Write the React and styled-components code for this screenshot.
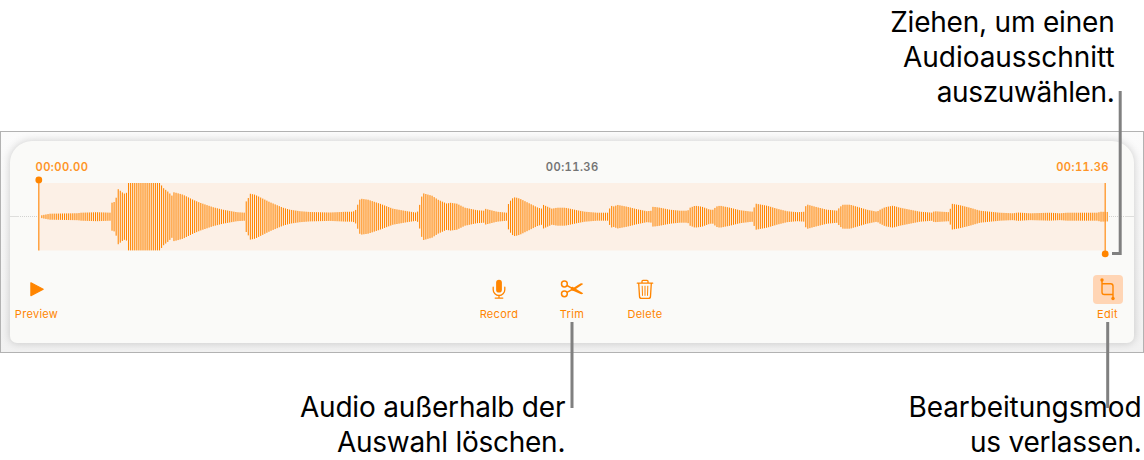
import styled, { createGlobalStyle } from 'styled-components'

const GlobalStyle = createGlobalStyle`
  * {
    box-sizing: border-box;
  }

  body {
    margin: 0;
    background: #FFFFFF;
  }
`

const Page = styled.main`
  position: relative;
  width: 1144px;
  height: 460px;
  overflow: hidden;
  font-family: Inter, "Liberation Sans", sans-serif;
`

const Caption = styled.div`
  font-size: 28px;
  line-height: 35px;
  letter-spacing: ${props => props.$spacing || 0}px;
  text-align: right;
  white-space: nowrap;
  color: #000000;
`

const TopCaptions = styled.div`
  height: 131px;
  padding: 5px 29.5px 0 0;
`

const BottomCaptions = styled.div`
  display: flex;
  justify-content: space-between;
  padding: 37px 2.5px 0 300px;
`

const Frame = styled.section`
  height: 222px;
  padding: 9px;
  border: 1px solid #B2B2B2;
  background: linear-gradient(#FBFBFB, #F1F1F1);
  overflow: hidden;
`

const Panel = styled.div`
  height: 202px;
  border-radius: 22px 22px 7px 7px;
  background: #FAFAF8;
  box-shadow: 0 0 9px rgba(0, 0, 0, 0.19);
`

const Times = styled.div`
  display: grid;
  grid-template-columns: 1fr 1fr 1fr;
  padding: 18px 25px 0 25.5px;
  height: 42px;
`

const Time = styled.span`
  font-size: 11.2px;
  font-weight: 600;
  line-height: 16px;
  letter-spacing: 0.42px;
  font-variant-numeric: tabular-nums;
  text-align: ${props => props.$align};
  color: ${props => props.$muted ? '#747474' : '#FF9426'};
`

const WaveSvg = styled.svg`
  display: block;
  width: 1124px;
  height: 86px;
  margin-top: -8px;
`

const Toolbar = styled.div`
  display: grid;
  grid-template-columns: 53px 1fr 53px;
  padding-top: 14px;
`

const Tools = styled.div`
  display: flex;
  justify-content: center;
  gap: 13px;
`

const ToolButton = styled.button`
  display: flex;
  flex-direction: column;
  align-items: center;
  width: ${props => props.$width || 60}px;
  padding: 0;
  border: 0;
  background: none;
  font-family: inherit;
  font-size: 11px;
  line-height: 16px;
  letter-spacing: 0.3px;
  color: #FF8500;
`

const IconBox = styled.span`
  display: flex;
  width: 30px;
  height: 29px;
  margin-bottom: 2px;
  border-radius: 4px;
  background: ${props => props.$active ? '#FFD5B5' : 'transparent'};
`

const Leaders = styled.svg`
  position: absolute;
  top: 0;
  left: 0;
  pointer-events: none;
`

// [x, half height] points along the recording
const envelope = [
  [39, 0.5], [42, 1.5], [50, 3], [78, 3.5], [81, 4], [97, 4.5], [111, 4],
  [112, 14], [115, 15], [116.7, 21], [118.3, 28], [120.7, 25.5], [124, 23],
  [126.8, 24], [127.5, 33.7], [160, 33.7], [163, 29], [168, 25], [172, 21],
  [174, 24.5], [183, 22], [193, 17], [200, 14], [213, 9.5], [223, 7],
  [237, 4.5], [245, 4], [246, 15], [248, 18], [250, 23], [255, 22],
  [262, 18.5], [270, 14.5], [283, 9], [290, 7], [300, 5.5], [310, 4.7],
  [330, 4.2], [345, 4.9], [353, 5], [356, 7], [357.7, 12], [359, 16.5],
  [361, 18], [368, 17], [380, 13], [393, 8], [407, 5.5], [417, 4],
  [419, 8], [420.5, 17], [423, 23.5], [432, 21], [438, 17], [447, 13],
  [450, 14], [457, 13], [465, 9], [477, 6.5], [484, 6], [485, 8],
  [497, 5], [506.7, 4], [508, 12], [511.7, 18], [515, 19.5], [520, 18],
  [530, 13], [538, 9], [542, 8], [543, 12], [552, 8], [557, 9], [565, 9],
  [570, 8], [577, 6.5], [585, 5], [597, 4], [608, 4], [609.5, 8],
  [610.7, 11], [615, 10], [616.5, 12], [627, 10], [637, 7.5], [647, 5.5],
  [651.7, 6], [653, 10], [660, 9], [670, 7], [680, 6], [687.7, 6],
  [690, 9], [695, 11], [702, 10], [710, 7], [714, 7], [715.5, 10],
  [720, 11], [730, 9], [740, 6.5], [752, 5], [754, 9], [756, 13],
  [767, 11], [777, 8], [787, 5.5], [797, 4.5], [805, 5], [806, 12.5],
  [817, 9.5], [827, 7], [838, 6], [839, 9], [843, 12], [850, 12],
  [857, 10], [867, 7], [877, 5], [880, 7], [885, 9.5], [893, 11],
  [900, 9], [910, 7], [920, 5], [933, 4], [934, 5.5], [949, 4.5],
  [950.3, 8], [951.5, 13], [960, 11.5], [970, 9], [980, 6], [990, 5],
  [1000, 4], [1013, 3.4], [1018, 4.2], [1030, 3.4], [1050, 4], [1060, 3.4],
  [1067, 4], [1083, 4], [1098, 4], [1100, 5], [1109, 4.7],
]

function heightAt(x) {
  const i = envelope.findIndex(point => point[0] > x)
  if (i < 1) return envelope[0][1]
  const [x0, h0] = envelope[i - 1]
  const [x1, h1] = envelope[i]
  return h0 + (h1 - h0) * (x - x0) / (x1 - x0)
}

const PITCH = 2.0647
const bars = []
for (let x = 41.8; x < 1108.8; x += PITCH) {
  bars.push({ x, h: heightAt(x) })
}

function Waveform() {
  return (
    <WaveSvg viewBox="10 175 1124 86">
      <rect x="39" y="183" width="1066" height="67.5" fill="#FCF0E6" />
      <path d="M10 216.5h9M1125 216.5h9" stroke="#DEDEDC" />
      <path d="M20 216.5h18M1109 216.5h16" stroke="#D2D2D0" strokeDasharray="1 1" />
      {bars.map(bar => (
        <rect key={bar.x} x={bar.x - 0.5} y={216.7 - bar.h} width="1.05" height={bar.h * 2} fill="#FF8500" />
      ))}
      <path d="M38.8 180v70.5M1105.2 183v71" stroke="#FF9426" strokeWidth="1.3" />
      <circle cx="38.8" cy="179.9" r="3.4" fill="#FF8500" />
      <circle cx="1105.2" cy="253.9" r="3.4" fill="#FF8500" />
    </WaveSvg>
  )
}

function PlayIcon() {
  return (
    <svg width="30" height="29" viewBox="0 0.8 30 29">
      <path d="M8.9 8.6v12.8L21.2 15z" fill="#FF8500" stroke="#FF8500" strokeWidth="1.2" strokeLinejoin="round" />
    </svg>
  )
}

function MicIcon() {
  return (
    <svg width="30" height="29" viewBox="0 0.8 30 29" fill="none" stroke="#FF8500" strokeWidth="1.3" strokeLinecap="round">
      <rect x="12.1" y="5.6" width="5.8" height="12.8" rx="2.9" fill="#FF8500" stroke="none" />
      <path d="M9.2 13v2.5a5.8 5.8 0 0 0 11.6 0V13M15 21.4v2.5M11.2 23.9h7.6" />
    </svg>
  )
}

function ScissorsIcon() {
  return (
    <svg width="30" height="29" viewBox="0 0.8 30 29" fill="none" stroke="#FF8500" strokeWidth="1.5">
      <circle cx="7.4" cy="9.8" r="2.9" />
      <circle cx="7.4" cy="19.6" r="2.9" />
      <path d="M10 11.3l5.2 2.9M10 18.2l5.4-3.1" />
      <path d="M13.4 15.6L23.4 9.3q1.6-.5 2.8.5L16 16.8zM13.6 13l2-.4 10.6 6.4q-1 1.4-2.7.9l-8-3.6q-1.9-.8-1.9-3.3z" fill="#FF8500" stroke="none" />
    </svg>
  )
}

function TrashIcon() {
  return (
    <svg width="30" height="29" viewBox="0 0.8 30 29" fill="none" stroke="#FF8500" strokeWidth="1.3" strokeLinecap="round" strokeLinejoin="round">
      <path d="M7.3 9h15.4M12 8.9V7.1q0-1 1-1h4q1 0 1 1v1.8M8.7 9.2l.8 13q.1 2 1.9 2h7.2q1.8 0 1.9-2l.8-13" />
      <path d="M12.2 12l.3 9.2M15 12v9.2M17.8 12l-.3 9.2" strokeWidth="1" />
    </svg>
  )
}

function CropIcon() {
  return (
    <svg width="30" height="29" viewBox="0.5 0.5 30 29" fill="none" stroke="#FF8500" strokeWidth="1.4">
      <path d="M9.5 5.5v12.2q0 2.3 2.3 2.3h8.7M9.5 9.2h8.7q2.3 0 2.3 2.3v12.5" />
      <circle cx="9.5" cy="5.5" r="1.7" fill="#FF8500" stroke="none" />
      <circle cx="20.5" cy="24" r="1.7" fill="#FF8500" stroke="none" />
    </svg>
  )
}

function Tool({ label, icon, width, active }) {
  return (
    <ToolButton $width={width}>
      <IconBox $active={active}>{icon}</IconBox>
      {label}
    </ToolButton>
  )
}

export default function App() {
  return (
    <Page>
      <GlobalStyle />
      <TopCaptions>
        <Caption $spacing={-0.2}>Ziehen, um einen</Caption>
        <Caption $spacing={-0.05}>Audioausschnitt</Caption>
        <Caption $spacing={-0.35}>auszuwählen.</Caption>
      </TopCaptions>
      <Frame>
        <Panel>
          <Times>
            <Time $align="left">00:00.00</Time>
            <Time $align="center" $muted>00:11.36</Time>
            <Time $align="right">00:11.36</Time>
          </Times>
          <Waveform />
          <Toolbar>
            <Tool label="Preview" icon={<PlayIcon />} width={53} />
            <Tools>
              <Tool label="Record" icon={<MicIcon />} />
              <Tool label="Trim" icon={<ScissorsIcon />} />
              <Tool label="Delete" icon={<TrashIcon />} />
            </Tools>
            <Tool label="Edit" icon={<CropIcon />} width={53} active />
          </Toolbar>
        </Panel>
      </Frame>
      <BottomCaptions>
        <div>
          <Caption $spacing={-0.22}>Audio außerhalb der</Caption>
          <Caption $spacing={-0.25}>Auswahl löschen.</Caption>
        </div>
        <div>
          <Caption $spacing={-0.1}>Bearbeitungsmod</Caption>
          <Caption $spacing={-0.25}>us verlassen.</Caption>
        </div>
      </BottomCaptions>
      <Leaders width="1144" height="460" fill="none" stroke="#808080" strokeWidth="3">
        <path d="M1120.2 91v162.5H1112M572 322v86M1107.7 322v86" />
      </Leaders>
    </Page>
  )
}
